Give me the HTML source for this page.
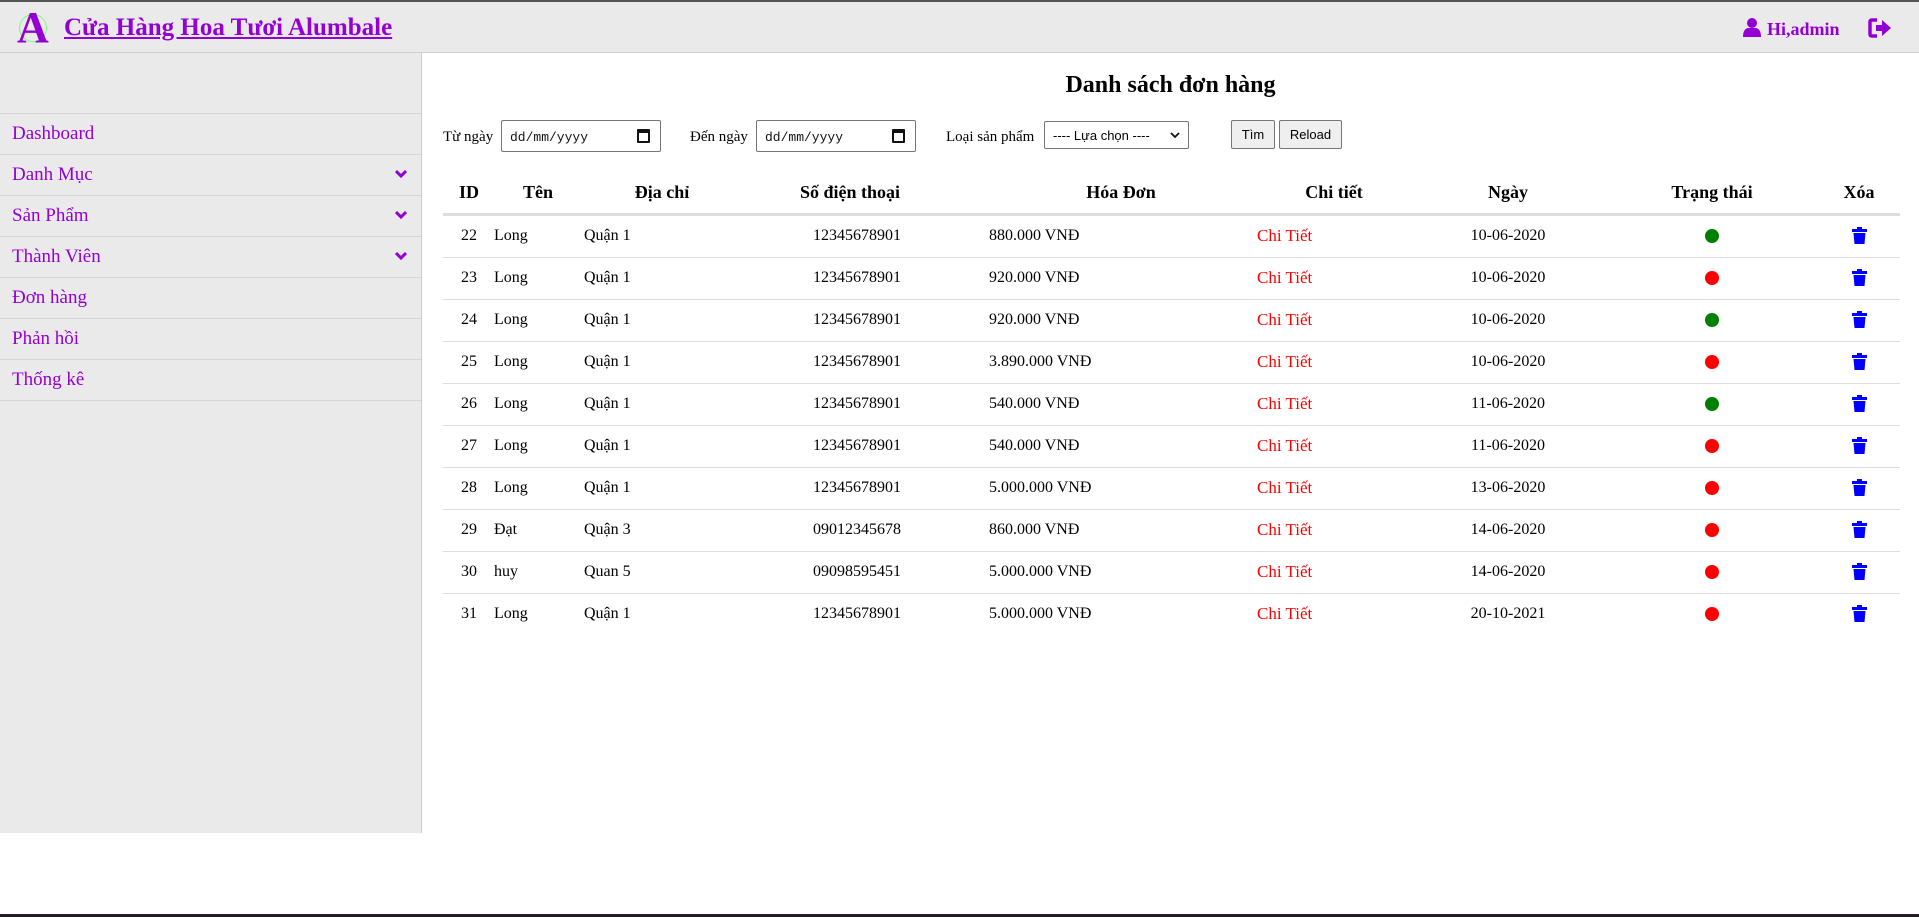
<!DOCTYPE html>
<html><head><meta charset="utf-8"><style>
*{margin:0;padding:0;box-sizing:border-box}
body{width:1919px;height:917px;position:relative;background:#fff;font-family:"Liberation Serif",serif;overflow:hidden}
.hdr{position:absolute;left:0;top:0;width:1919px;height:53px;background:#eaeaea;border-top:2px solid #555;border-bottom:1px solid #d0d0d0}
.logoA{position:absolute;left:17px;top:4px;font:bold 44px "Liberation Serif",serif;color:#9400d3;line-height:44px}
.logoC{position:absolute;left:19px;top:12px;width:28px;height:28px;border:1px solid #7f7;border-radius:50%}
.title{position:absolute;left:64px;top:12px;font:bold 25px "Liberation Serif",serif;color:#9400d3;text-decoration:underline}
.hi{position:absolute;left:1767px;top:17px;font:bold 18px "Liberation Serif",serif;color:#9400d3}
.side{position:absolute;left:0;top:53px;width:422px;height:780px;background:#eaeaea;border-right:1px solid #ccc}
.item{position:absolute;left:0;width:421px;height:41px;border-top:1px solid #d6d6d6;color:#9400d3;font-size:19px;padding:9px 0 0 12px}
.chev{position:absolute;right:14px;top:14px}
.h1{position:absolute;left:0;width:1919px;padding-left:422px;text-align:center;top:72px;font:bold 24px "Liberation Serif",serif}
.lbl{position:absolute;font-size:15px;top:129px}
.date{position:absolute;top:120px;height:32px;border:1px solid #767676;border-radius:2px;background:#fff;font:13px "Liberation Mono",monospace;padding:9px 0 0 8px;color:#111}
.cal{position:absolute;right:10px;top:8px;width:13px;height:14px;border:2px solid #111;border-top-width:4px;border-radius:1px}
.sel{position:absolute;left:1044px;top:121px;width:145px;height:28px;border:1px solid #767676;border-radius:2px;font:13px "Liberation Sans",sans-serif;padding:6px 0 0 8px}
.btn{position:absolute;top:120px;height:29px;background:#efefef;border:1px solid #767676;border-radius:2px;font:13px "Liberation Sans",sans-serif;text-align:center;padding-top:6px}
.th{position:absolute;top:182px;font-weight:bold;font-size:18px;transform:translateX(-50%);white-space:nowrap}
.hline{position:absolute;left:443px;top:213px;width:1457px;height:3px;background:#ddd}
.row{position:absolute;left:443px;width:1457px;height:42px;border-bottom:1px solid #ddd;font-size:16px}
.row span{position:absolute;top:11px;white-space:nowrap}
.c{transform:translateX(-50%)}
.ct{color:#f00;font-size:17px;top:10px!important}
.dot{position:absolute;top:13px;width:14px;height:14px;border-radius:50%;left:1262px}
.tr{position:absolute;left:1409px;top:11px}
</style></head><body>
<div class="hdr">
<div class="logoC"></div><div class="logoA">A</div>
<div class="title">Cửa Hàng Hoa Tươi Alumbale</div>
<svg style="position:absolute;left:1742px;top:15px" width="20" height="20" viewBox="0 0 20 20"><circle cx="10" cy="6" r="5" fill="#9400d3"/><path d="M1 20 C1 13 4 11 7 11 L13 11 C16 11 19 13 19 20Z" fill="#9400d3"/></svg>
<div class="hi">Hi,admin</div>
<svg style="position:absolute;left:1868px;top:16px" width="24" height="20" viewBox="0 0 24 20"><path d="M9 2 H4 Q2 2 2 4 V16 Q2 18 4 18 H9" stroke="#9400d3" stroke-width="3.5" fill="none"/><path d="M8 7 H14 V2 L23 10 L14 18 V13 H8Z" fill="#9400d3"/></svg>
</div>
<div class="side">
<div class="item" style="top:60px">Dashboard</div>
<div class="item" style="top:101px">Danh Mục<svg class="chev" width="12" height="10" viewBox="0 0 12 10"><path d="M1 2 L6 7 L11 2" stroke="#9400d3" stroke-width="3" fill="none"/></svg></div>
<div class="item" style="top:142px">Sản Phẩm<svg class="chev" width="12" height="10" viewBox="0 0 12 10"><path d="M1 2 L6 7 L11 2" stroke="#9400d3" stroke-width="3" fill="none"/></svg></div>
<div class="item" style="top:183px">Thành Viên<svg class="chev" width="12" height="10" viewBox="0 0 12 10"><path d="M1 2 L6 7 L11 2" stroke="#9400d3" stroke-width="3" fill="none"/></svg></div>
<div class="item" style="top:224px">Đơn hàng</div>
<div class="item" style="top:265px">Phản hồi</div>
<div class="item" style="top:306px">Thống kê</div>
<div class="item" style="top:347px;height:1px"></div>
</div>
<div class="h1">Danh sách đơn hàng</div>
<div class="lbl" style="left:443px">Từ ngày</div>
<div class="date" style="left:501px;width:160px">dd/mm/yyyy<div class="cal"></div></div>
<div class="lbl" style="left:690px">Đến ngày</div>
<div class="date" style="left:756px;width:160px">dd/mm/yyyy<div class="cal"></div></div>
<div class="lbl" style="left:946px">Loại sản phẩm</div>
<div class="sel">---- Lựa chọn ----<svg style="position:absolute;right:8px;top:9px" width="10" height="8" viewBox="0 0 10 8"><path d="M1 2 L5 6 L9 2" stroke="#111" stroke-width="1.8" fill="none"/></svg></div>
<div class="btn" style="left:1231px;width:44px">Tìm</div>
<div class="btn" style="left:1279px;width:63px">Reload</div>
<div class="th" style="left:469px">ID</div>
<div class="th" style="left:538px">Tên</div>
<div class="th" style="left:662px">Địa chỉ</div>
<div class="th" style="left:850px">Số điện thoại</div>
<div class="th" style="left:1121px">Hóa Đơn</div>
<div class="th" style="left:1334px">Chi tiết</div>
<div class="th" style="left:1508px">Ngày</div>
<div class="th" style="left:1712px">Trạng thái</div>
<div class="th" style="left:1859px">Xóa</div>
<div class="hline"></div>
<div id="rows"></div>
<div style="position:absolute;left:0;top:914px;width:1919px;height:3px;background:#221d22"></div>
<script>
var d=[[22,"Long","Quận 1","12345678901","880.000 VNĐ","10-06-2020",1],[23,"Long","Quận 1","12345678901","920.000 VNĐ","10-06-2020",0],[24,"Long","Quận 1","12345678901","920.000 VNĐ","10-06-2020",1],[25,"Long","Quận 1","12345678901","3.890.000 VNĐ","10-06-2020",0],[26,"Long","Quận 1","12345678901","540.000 VNĐ","11-06-2020",1],[27,"Long","Quận 1","12345678901","540.000 VNĐ","11-06-2020",0],[28,"Long","Quận 1","12345678901","5.000.000 VNĐ","13-06-2020",0],[29,"Đạt","Quận 3","09012345678","860.000 VNĐ","14-06-2020",0],[30,"huy","Quan 5","09098595451","5.000.000 VNĐ","14-06-2020",0],[31,"Long","Quận 1","12345678901","5.000.000 VNĐ","20-10-2021",0]];
var h="";d.forEach(function(r,i){var t=216+i*42;
h+='<div class="row" style="top:'+t+'px;'+(i==9?'border-bottom:none':'')+'"><span class="c" style="left:26px">'+r[0]+'</span><span style="left:51px">'+r[1]+'</span><span style="left:141px">'+r[2]+'</span><span class="c" style="left:414px">'+r[3]+'</span><span style="left:546px">'+r[4]+'</span><span class="ct" style="left:814px">Chi Tiết</span><span class="c" style="left:1065px">'+r[5]+'</span><div class="dot" style="background:'+(r[6]?'#008000':'#f00')+'"></div><svg class="tr" width="15" height="17" viewBox="0 0 15 17"><rect x="5" y="0" width="5" height="2" fill="#00f"/><rect x="0" y="2" width="15" height="3" fill="#00f"/><path d="M1.5 6 H13.5 L12.5 17 H2.5Z" fill="#00f"/></svg></div>';});
document.getElementById("rows").innerHTML=h;
</script>
</body></html>
